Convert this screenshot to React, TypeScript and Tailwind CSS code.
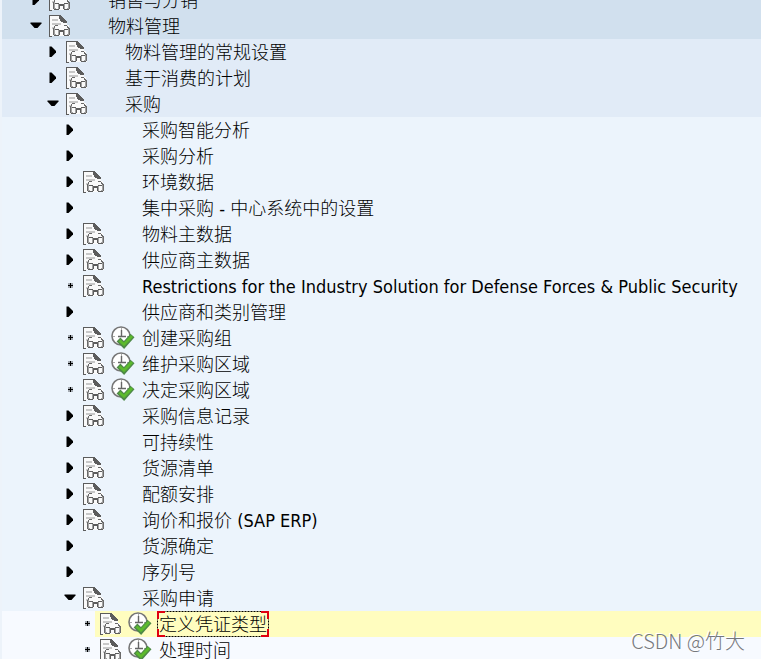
import { clsx } from 'clsx'

type NodeState = 'closed' | 'open' | 'leaf'

interface TreeNode {
  label: string
  level: number
  state: NodeState
  doc?: boolean
  exec?: boolean
  selected?: boolean
}

const nodes: TreeNode[] = [
  { label: '销售与分销', level: 1, state: 'closed', doc: true },
  { label: '物料管理', level: 1, state: 'open', doc: true },
  { label: '物料管理的常规设置', level: 2, state: 'closed', doc: true },
  { label: '基于消费的计划', level: 2, state: 'closed', doc: true },
  { label: '采购', level: 2, state: 'open', doc: true },
  { label: '采购智能分析', level: 3, state: 'closed' },
  { label: '采购分析', level: 3, state: 'closed' },
  { label: '环境数据', level: 3, state: 'closed', doc: true },
  { label: '集中采购 - 中心系统中的设置', level: 3, state: 'closed' },
  { label: '物料主数据', level: 3, state: 'closed', doc: true },
  { label: '供应商主数据', level: 3, state: 'closed', doc: true },
  { label: 'Restrictions for the Industry Solution for Defense Forces & Public Security', level: 3, state: 'leaf', doc: true },
  { label: '供应商和类别管理', level: 3, state: 'closed' },
  { label: '创建采购组', level: 3, state: 'leaf', doc: true, exec: true },
  { label: '维护采购区域', level: 3, state: 'leaf', doc: true, exec: true },
  { label: '决定采购区域', level: 3, state: 'leaf', doc: true, exec: true },
  { label: '采购信息记录', level: 3, state: 'closed', doc: true },
  { label: '可持续性', level: 3, state: 'closed' },
  { label: '货源清单', level: 3, state: 'closed', doc: true },
  { label: '配额安排', level: 3, state: 'closed', doc: true },
  { label: '询价和报价 (SAP ERP)', level: 3, state: 'closed', doc: true },
  { label: '货源确定', level: 3, state: 'closed' },
  { label: '序列号', level: 3, state: 'closed' },
  { label: '采购申请', level: 3, state: 'open', doc: true },
  { label: '定义凭证类型', level: 4, state: 'leaf', doc: true, exec: true, selected: true },
  { label: '处理时间', level: 4, state: 'leaf', doc: true, exec: true },
]

const levelStyles: Record<number, string> = {
  1: 'bg-[#d1e0ee] pl-[26px]',
  2: 'bg-[#e1ebf7] pl-[43px]',
  3: 'bg-[#ecf4fc] pl-[60px]',
  4: 'bg-[#f7faff] pl-[77px]',
}

function Marker({ state }: { state: NodeState }) {
  return (
    <svg width="16" height="16" viewBox="0 0 16 16" aria-hidden="true">
      {state === 'closed' && <path d="M4.5 2.5 H6.5 L11 7 V8.5 L6.5 13 H4.5 Z" fill="#000" />}
      {state === 'open' && <path d="M2.5 4.5 H13.5 V5.5 L9.5 10 H6.5 L2.5 5.5 Z" fill="#000" />}
      {state === 'leaf' && (
        <>
          <rect x="6" y="5" width="5" height="5" fill="#a4aab1" />
          <path d="M8 5 H9 V7 H11 V8 H9 V10 H8 V8 H6 V7 H8 Z" fill="#000" />
        </>
      )}
    </svg>
  )
}

function DocIcon() {
  return (
    <svg width="22" height="22" viewBox="0 0 22 22" shapeRendering="crispEdges" aria-hidden="true">
      <path d="M0 0 H12 V1 H13 V2 H14 V3 H15 V4 H16 V5 H17 V6 H18 V10 H20 V13 H21 V21 H3 V22 H0 Z" fill="#fafafa" />
      <path d="M0 0 H12 V1 H1 V21 H3 V22 H0 Z" fill="#5c5c5c" />
      <path d="M10 0 H12 V1 H13 V2 H14 V3 H15 V4 H16 V5 H17 V6 H18 V8 H14 V7 H12 V6 H11 V4 H10 Z" fill="#5c5c5c" />
      <path d="M3 4 H9 V6 H3 Z M3 8 H12 V10 H3 Z M3 12 H5 V14 H3 Z" fill="#c8c8c8" />
      {/* temples */}
      <path
        d="M6 10 H9 V11 H6 Z M5 11 H6 V13 H5 Z M4 13 H5 V20 H4 Z M15 10 H18 V11 H15 Z M18 11 H19 V13 H18 Z M20 13 H21 V20 H20 Z M19 12 H20 V14 H19 Z"
        fill="#6a6a6a"
      />
      {/* lenses */}
      <path
        d="M6 14 H10 V15 H6 Z M10 15 H11 V20 H10 Z M5 20 H10 V21 H5 Z M15 14 H19 V15 H15 Z M14 15 H15 V20 H14 Z M15 20 H20 V21 H15 Z M11 15 H14 V17 H11 Z"
        fill="#5c5c5c"
      />
      <path
        d="M5 13 H6 V20 H5 Z M6 19 H7 V20 H6 Z M9 15 H10 V20 H9 Z M15 15 H16 V20 H15 Z M19 14 H20 V20 H19 Z M18 19 H19 V20 H18 Z"
        fill="#a2a2a2"
      />
    </svg>
  )
}

function ExecIcon() {
  return (
    <svg width="24" height="24" viewBox="0 0 24 24" aria-hidden="true">
      <circle cx="10" cy="10" r="9" fill="#fff" stroke="#777" strokeWidth="1.6" />
      <path d="M10.5 2 V4 M2 10.5 H4 M16 10.5 H18" stroke="#aaa" />
      <path d="M10.5 4 V11 M7 10.5 H15" fill="none" stroke="#666" strokeWidth="1.4" />
      <path d="M7.5 13.5 L13 19 L21.5 9.5" fill="none" stroke="#4f8a48" strokeWidth="5.4" />
      <path d="M8.5 14.5 L13 18.5 L21 10" fill="none" stroke="#5cbb2c" strokeWidth="2.6" />
    </svg>
  )
}

function FocusCorners() {
  return (
    <svg className="absolute inset-0 h-full w-full" viewBox="0 0 112 26" preserveAspectRatio="none" aria-hidden="true">
      <rect x="0.5" y="0.5" width="111" height="25" fill="none" stroke="#000" strokeDasharray="2 1" />
      <path d="M1 8 V1 H8 M104 1 H111 V8 M111 18 V25 H104 M8 25 H1 V18" fill="none" stroke="#e00010" strokeWidth="2" />
    </svg>
  )
}

function TreeRow({ node }: { node: TreeNode }) {
  return (
    <li
      role="treeitem"
      aria-level={node.level}
      aria-selected={!!node.selected}
      aria-expanded={node.state === 'leaf' ? undefined : node.state === 'open'}
      className={clsx('flex h-[26px]', levelStyles[node.level])}
    >
      {node.state === 'leaf' ? (
        <span className="flex w-4 shrink-0 items-center">
          <Marker state="leaf" />
        </span>
      ) : (
        <button type="button" aria-label={node.label} className="flex w-4 shrink-0 items-center">
          <Marker state={node.state} />
        </button>
      )}
      <div className={clsx('flex min-w-0 flex-1 items-center pl-[5px]', node.selected && 'bg-[#fffdbf]')}>
        <span className="w-7 shrink-0">{node.doc && <DocIcon />}</span>
        <span className="w-[29px] shrink-0">{node.exec && <ExecIcon />}</span>
        <span className="relative h-[26px] px-0.5 leading-7 whitespace-nowrap">
          {node.selected && <FocusCorners />}
          {node.label}
        </span>
      </div>
    </li>
  )
}

export default function App() {
  return (
    <main className="relative h-screen overflow-hidden bg-[#f7faff] font-['DejaVu_Sans_Condensed','DejaVu_Sans','Noto_Sans_CJK_SC',sans-serif] text-[18px] font-light text-black">
      <ul role="tree" className="-mt-[13px] border-l-2 border-[#edf3fa]">
        {nodes.map((node) => (
          <TreeRow key={node.label} node={node} />
        ))}
      </ul>
      <p className="absolute right-4 bottom-1 font-['Noto_Sans_CJK_SC',sans-serif] text-[20px] leading-7 font-light text-[#75787d] [text-shadow:-1px_-1px_0_#fff]">
        CSDN @竹大
      </p>
    </main>
  )
}
